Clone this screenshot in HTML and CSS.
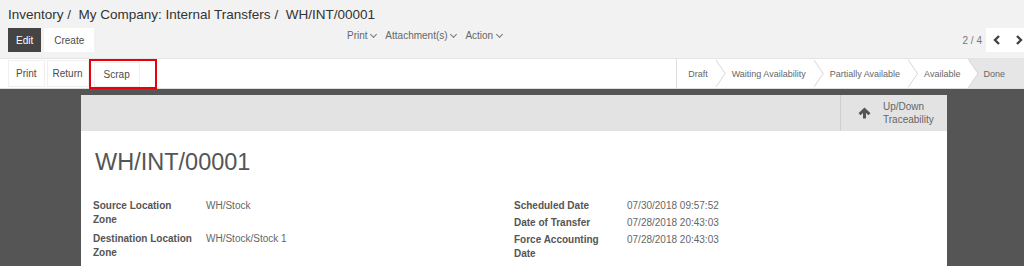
FILE: index.html
```html
<!DOCTYPE html>
<html lang="en">
<head>
  <meta charset="UTF-8">
  <meta name="viewport" content="width=device-width, initial-scale=1.0">
  <title>WH/INT/00001</title>
  <link rel="stylesheet" href="styles.css">
</head>
<body>
  <div class="control-panel">
    <ol class="breadcrumb">
      <li><a href="#">Inventory</a></li>
      <li><a href="#">My Company: Internal Transfers</a></li>
      <li class="active">WH/INT/00001</li>
    </ol>
    <div class="cp-row">
      <div class="cp-buttons">
        <button class="btn btn-primary">Edit</button>
        <button class="btn btn-create">Create</button>
      </div>
      <div class="cp-sidebar">
        <a href="#">Print <span class="caret"></span></a>
        <a href="#">Attachment(s) <span class="caret"></span></a>
        <a href="#">Action <span class="caret"></span></a>
      </div>
      <div class="cp-pager">
        <span class="pager-value">2 / 4</span>
        <div class="pager-buttons">
          <button class="pager-btn">
            <svg width="8" height="10" viewBox="0 0 8 10"><path d="M6 1 L2 5 L6 9" fill="none" stroke="#444" stroke-width="2.4"/></svg>
          </button>
          <button class="pager-btn">
            <svg width="8" height="10" viewBox="0 0 8 10"><path d="M2 1 L6 5 L2 9" fill="none" stroke="#444" stroke-width="2.4"/></svg>
          </button>
        </div>
      </div>
    </div>
  </div>

  <div class="form-statusbar">
    <div class="header-buttons">
      <button class="btn btn-header btn-print">Print</button>
      <button class="btn btn-header btn-return">Return</button>
      <span class="highlight"><button class="btn btn-header">Scrap</button></span>
    </div>
    <div class="statusbar-status">
      <span class="status-item">Draft</span>
      <span class="status-item">Waiting Availability</span>
      <span class="status-item">Partially Available</span>
      <span class="status-item">Available</span>
      <span class="status-item current">Done</span>
    </div>
  </div>

  <div class="form-view">
    <div class="sheet">
      <div class="button-box">
        <button class="stat-button">
          <svg class="stat-icon" width="13" height="12" viewBox="0 0 13 12">
            <path d="M6.5 0.5 L12.5 6.3 L10.4 8.3 L8 5.9 L8 11.5 L5 11.5 L5 5.9 L2.6 8.3 L0.5 6.3 Z" fill="#555"/>
          </svg>
          <span class="stat-text">Up/Down<br>Traceability</span>
        </button>
      </div>
      <div class="sheet-body">
        <h1 class="record-title">WH/INT/00001</h1>
        <div class="groups">
          <table class="group">
            <tr>
              <td class="label">Source Location Zone</td>
              <td class="value">WH/Stock</td>
            </tr>
            <tr>
              <td class="label">Destination Location Zone</td>
              <td class="value">WH/Stock/Stock 1</td>
            </tr>
          </table>
          <table class="group group-dates">
            <tr>
              <td class="label">Scheduled Date</td>
              <td class="value">07/30/2018 09:57:52</td>
            </tr>
            <tr>
              <td class="label">Date of Transfer</td>
              <td class="value">07/28/2018 20:43:03</td>
            </tr>
            <tr>
              <td class="label">Force Accounting Date</td>
              <td class="value">07/28/2018 20:43:03</td>
            </tr>
          </table>
        </div>
      </div>
    </div>
  </div>
</body>
</html>
```

FILE: styles.css
```css
* {
  margin: 0;
  padding: 0;
  box-sizing: border-box;
}

body {
  font-family: 'Liberation Sans', Arial, sans-serif;
  font-size: 10px;
  color: #4c4c4c;
  background: #555;
  overflow: hidden;
}

a {
  text-decoration: none;
  color: inherit;
}

button {
  font-family: inherit;
  border: none;
  cursor: pointer;
}

/* Control panel */
.control-panel {
  background: #f2f2f2;
  padding: 6px 0 6px 8px;
  border-bottom: 1px solid #e4e4e4;
}

.breadcrumb {
  list-style: none;
  display: flex;
  font-size: 13.5px;
  line-height: 17px;
  color: #333;
}

.breadcrumb li + li::before {
  content: "\00a0/\00a0\00a0";
}

.cp-row {
  display: flex;
  align-items: flex-start;
  margin-top: 5px;
}

.cp-buttons {
  display: flex;
  gap: 3px;
  width: 339px;
}

.btn {
  font-size: 10px;
  height: 24px;
  padding: 0 8px;
  background: #fff;
  color: #4c4c4c;
}

.btn-primary {
  background: #444;
  color: #fff;
  padding: 0 8px;
}

.btn-create {
  padding: 0 10px;
}

.cp-sidebar {
  display: flex;
  gap: 9px;
  padding-top: 2px;
  color: #666;
  font-size: 10px;
}

.caret {
  display: inline-block;
  width: 5px;
  height: 5px;
  border-right: 1px solid #777;
  border-bottom: 1px solid #777;
  transform: rotate(45deg);
  margin: 0 0 2px 1px;
}

.cp-pager {
  margin-left: auto;
  display: flex;
  align-items: center;
  gap: 4px;
}

.pager-value {
  color: #777;
  font-size: 10px;
}

.pager-buttons {
  display: flex;
  background: #fff;
  width: 38px;
  overflow: hidden;
}

.pager-btn {
  flex: 0 0 22px;
  height: 24px;
  background: #fff;
  display: flex;
  align-items: center;
  justify-content: center;
}

/* Status bar */
.form-statusbar {
  display: flex;
  justify-content: space-between;
  background: #fff;
  height: 30px;
  padding-left: 8px;
  border-bottom: 1px solid #ddd;
}

.header-buttons {
  display: flex;
  align-items: center;
  gap: 2px;
}

.btn-header {
  height: 27px;
  border: 1px solid #f0f0f0;
}

.btn-print {
  padding: 0 7px;
}

.btn-return {
  padding: 0 5px;
}

.highlight {
  display: flex;
  align-items: center;
  align-self: flex-end;
  height: 30px;
  border: 2px solid #e8000b;
  padding: 0 15px 0 3px;
  margin: 0 0 -1px -2px;
}

.highlight .btn-header {
  height: 25px;
  padding: 0 9px;
}

.statusbar-status {
  display: flex;
  border-left: 1px solid #ddd;
}

.status-item {
  position: relative;
  display: flex;
  align-items: center;
  padding: 0 8px 0 16px;
  font-size: 9px;
  color: #666;
  background: #fff;
}

.status-item:first-child {
  padding-left: 11px;
}

.status-item::before,
.status-item::after {
  content: "";
  position: absolute;
  top: 0;
  width: 10px;
  height: 100%;
  clip-path: polygon(0 0, 100% 50%, 0 100%);
  z-index: 1;
}

.status-item::before {
  right: -10px;
  background: #d6d6d6;
}

.status-item::after {
  right: -9px;
  background: #fff;
}

.status-item.current {
  background: #e6e6e6;
  padding: 0 19px 0 15px;
}

.status-item.current::before,
.status-item.current::after {
  display: none;
}

/* Form sheet */
.form-view {
  padding: 6px 77px 0 81px;
}

.sheet {
  background: #fff;
  min-height: 200px;
}

.button-box {
  display: flex;
  justify-content: flex-end;
  background: #e3e3e3;
  height: 36px;
}

.stat-button {
  display: flex;
  align-items: center;
  gap: 12px;
  width: 107px;
  padding-left: 17px;
  background: #e3e3e3;
  border-left: 1px solid #cfcfcf;
  text-align: left;
}

.stat-text {
  font-size: 10px;
  line-height: 13px;
  color: #666;
}

.sheet-body {
  padding: 16px 12px 0 12px;
}

.record-title {
  font-size: 23.5px;
  font-weight: normal;
  color: #555;
  line-height: 30px;
  padding-left: 2px;
}

.groups {
  display: flex;
  margin-top: 20px;
}

.group {
  width: 422px;
  border-collapse: collapse;
}

.group td {
  vertical-align: top;
  padding: 2px 0 2px 0;
  line-height: 14px;
  font-size: 10px;
}

.group-dates td {
  padding: 2px 0 1px 0;
}

.group .label {
  width: 113px;
  font-weight: bold;
  color: #555;
  padding-right: 13px;
}

.group .value {
  color: #666;
}
```
